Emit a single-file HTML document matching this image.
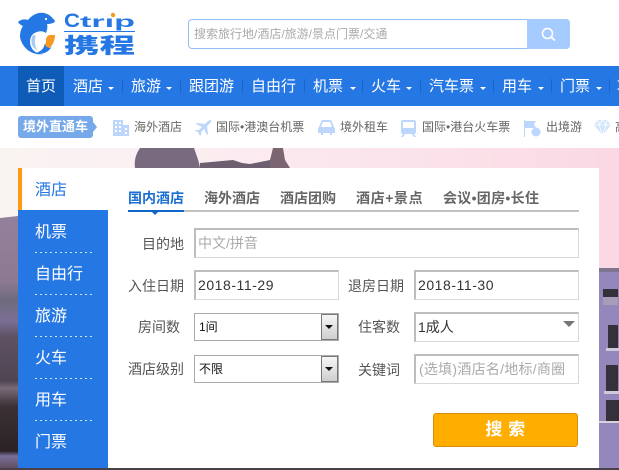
<!DOCTYPE html>
<html><head><meta charset="utf-8"><style>
*{box-sizing:border-box;margin:0;padding:0}
html,body{width:619px;height:470px;overflow:hidden;background:#fff;font-family:"Liberation Sans","Noto Sans CJK SC",sans-serif}
.a{position:absolute;white-space:nowrap}
#root{position:relative;width:619px;height:470px;overflow:hidden}
.nav{left:0;top:66px;width:619px;height:40px;background:#2577e3}
.n{position:absolute;top:78px;font-size:15px;line-height:18px;color:#fff;white-space:nowrap}
.c{position:absolute;top:87px;width:0;height:0;border-left:3px solid transparent;border-right:3px solid transparent;border-top:3px solid #fff}
.s{position:absolute;top:79px;width:1px;height:14px;background:#1a66c8}
.t{position:absolute;top:119px;font-size:12px;line-height:16px;color:#666;white-space:nowrap}
.side{position:absolute;left:35px;font-size:16px;line-height:20px;color:#fff;white-space:nowrap}
.dot{position:absolute;left:35px;width:60px;height:1px;background:repeating-linear-gradient(90deg,#cfe2fa 0 2px,transparent 2px 5px)}
.tab{position:absolute;top:189px;font-size:14px;line-height:18px;font-weight:bold;color:#666;white-space:nowrap}
.l{position:absolute;font-size:14px;line-height:18px;color:#555;text-align:right;white-space:nowrap}
.i{position:absolute;height:30px;background:#fff;border:1px solid #d8d8d8;border-top:2px solid #bdbdbd;border-left:2px solid #bdbdbd;font-size:14px;line-height:26px;padding-left:2px;color:#333;white-space:nowrap}
.d{letter-spacing:.55px}
.sel{position:absolute;left:194px;width:145px;height:28px;border:1px solid #aaa;background:#fff;font-size:12px;line-height:26px;color:#111;padding-left:4px}
.sb{position:absolute;right:0;top:0;width:17px;height:26px;border:1px solid #777;background:linear-gradient(#f6f6f6,#cfcfcf)}
.sb i{position:absolute;left:3px;top:10px;width:0;height:0;border-left:4px solid transparent;border-right:4px solid transparent;border-top:4px solid #111}
.w{position:absolute;background:#35313a}
</style></head><body><div id="root">

<!-- logo -->
<svg class="a" style="left:0;top:0" width="150" height="65" viewBox="0 0 150 65">
<path d="M18 22C21 19 25 19 28 20C32 15 38 12 44 13C49 14 52 17 55 21C55 23 50 24 47 24C48 27 47 30 46 33C42 30 37 31 33 34C29 38 29 45 33 50C36 53 40 54 44 54C32 56 22 48 20 37C20 32 21 29 23 26C21 25 19 24 18 22Z" fill="#2577e3"/>
<circle cx="46" cy="19" r="1.1" fill="#fff"/>
<path d="M33 35C30 40 31 47 37 50C35 46 34 40 36 36Z" fill="#a9cbf3"/>
<path d="M38 52C44 50 46 45 46 40C46 37 48 35 50 35H55C55 44 49 52 38 52Z" fill="#f59a23"/>
<path d="M36 53C42 51 44 48 45 43C45 47 50 50 52 46C49 52 43 55 36 53Z" fill="#2577e3"/>
<text x="64" y="27" font-family="Liberation Sans" font-weight="bold" font-size="19" fill="#2577e3" textLength="16" lengthAdjust="spacingAndGlyphs">C</text>
<text x="80" y="27" font-family="Liberation Sans" font-weight="bold" font-size="16" fill="#2577e3" textLength="55" lengthAdjust="spacingAndGlyphs">trıp</text>
<circle cx="113" cy="15" r="2.200" fill="#f59a23"/>
<rect x="64" y="31" width="71" height="1" fill="#2577e3"/>
<text x="64" y="53" font-family="Noto Sans CJK SC" font-weight="900" font-size="21" fill="#2577e3" textLength="71" lengthAdjust="spacingAndGlyphs">携程</text>
</svg>

<!-- search -->
<div class="a" style="left:188px;top:19px;width:382px;height:30px;border:1px solid #93bdf5;border-radius:4px;background:#fff;font-size:12px;line-height:28px;color:#aaa;padding-left:5px;overflow:hidden">搜索旅行地/酒店/旅游/景点门票/交通</div>
<div class="a" style="left:527px;top:19px;width:43px;height:30px;background:#a6cbff;border-radius:0 4px 4px 0"></div>
<svg class="a" style="left:540px;top:26px" width="17" height="17" viewBox="0 0 17 17"><circle cx="7.500" cy="7.500" r="5" fill="none" stroke="#fff" stroke-width="1.6"/><path d="M11 11L15 14.500" stroke="#fff" stroke-width="1.8"/></svg>

<!-- nav -->
<div class="a nav"></div>
<div class="a" style="left:18px;top:66px;width:46px;height:40px;background:#0e5cb8"></div>
<div class="n" style="left:26px">首页</div>
<div class="n" style="left:73px">酒店</div><div class="c" style="left:108px"></div><div class="s" style="left:122px"></div>
<div class="n" style="left:131px">旅游</div><div class="c" style="left:166px"></div><div class="s" style="left:180px"></div>
<div class="n" style="left:189px">跟团游</div><div class="s" style="left:242px"></div>
<div class="n" style="left:251px">自由行</div><div class="s" style="left:304px"></div>
<div class="n" style="left:313px">机票</div><div class="c" style="left:350px"></div><div class="s" style="left:362px"></div>
<div class="n" style="left:371px">火车</div><div class="c" style="left:406px"></div><div class="s" style="left:420px"></div>
<div class="n" style="left:429px">汽车票</div><div class="c" style="left:480px"></div><div class="s" style="left:493px"></div>
<div class="n" style="left:502px">用车</div><div class="c" style="left:538px"></div><div class="s" style="left:551px"></div>
<div class="n" style="left:560px">门票</div><div class="c" style="left:596px"></div><div class="s" style="left:609px"></div>
<div class="n" style="left:617px">攻略</div>

<!-- sub bar -->
<div class="a" style="left:18px;top:116px;width:75px;height:22px;background:#76a9ea;border-radius:3px;font-size:13px;line-height:21px;font-weight:bold;color:#fff;padding-left:5px">境外直通车</div>
<div class="a" style="left:93px;top:122px;width:0;height:0;border-left:4px solid #76a9ea;border-top:5px solid transparent;border-bottom:5px solid transparent"></div>
<svg class="a" style="left:112px;top:119px" width="18" height="18" viewBox="0 0 18 18"><path d="M1 1H11V17H1ZM11 6H17V17H11Z" fill="#bcd7fb"/><path d="M3 3h2v2H3zM7 3h2v2H7zM3 7h2v2H3zM7 7h2v2H7zM3 11h2v2H3zM7 11h2v2H7zM13 9h2v2h-2zM13 13h2v2h-2z" fill="#fff"/></svg>
<div class="t" style="left:134px">海外酒店</div>
<svg class="a" style="left:195px;top:120px" width="17" height="16" viewBox="0 0 17 16"><path d="M16 0C14 0 12 2 10 4L2 3 1 4 7 7 4 10 1 10 0 11 3 12 5 16 6 15 6 12 9 9 12 15 13 14 12 6C14 4 17 2 16 0Z" fill="#bcd7fb"/></svg>
<div class="t" style="left:216px">国际•港澳台机票</div>
<svg class="a" style="left:318px;top:120px" width="17" height="15" viewBox="0 0 17 15"><path d="M1 7L3 2C3 1 4 0 5 0H12C13 0 14 1 14 2L16 7C17 8 17 9 17 10V13H14V15H12V13H5V15H3V13H0V10C0 9 0 8 1 7ZM3 7H14L12 2H5Z" fill="#bcd7fb" fill-rule="evenodd"/></svg>
<div class="t" style="left:340px">境外租车</div>
<svg class="a" style="left:401px;top:120px" width="15" height="17" viewBox="0 0 15 17"><path d="M2 0H13C14 0 15 1 15 2V12C15 13 14 14 13 14L15 17H13L11 14H4L2 17H0L2 14C1 14 0 13 0 12V2C0 1 1 0 2 0ZM2 2V8H13V2Z" fill="#bcd7fb" fill-rule="evenodd"/></svg>
<div class="t" style="left:422px">国际•港台火车票</div>
<svg class="a" style="left:524px;top:120px" width="17" height="17" viewBox="0 0 17 17"><path d="M0 0H1V17H0ZM1 1H12L10 4 12 8H1Z" fill="#bcd7fb"/><circle cx="12" cy="12" r="4.500" fill="#bcd7fb"/></svg>
<div class="t" style="left:546px">出境游</div>
<svg class="a" style="left:594px;top:120px" width="17" height="15" viewBox="0 0 17 15"><path d="M4 0H13L17 5 8.500 15 0 5Z" fill="#d3e5fc"/><path d="M0 5H17M5 5L8.500 15 12 5M4 0L5 5 8.500 0 12 5 13 0" fill="none" stroke="#fff" stroke-width=".8"/></svg>
<div class="t" style="left:615px">高</div>

<!-- background photo -->
<div class="a" style="left:0;top:148px;width:619px;height:322px;background:linear-gradient(90deg,#f9f4f2 0,#fbf0f2 130px,#fbe8ee 300px,#fbdfe8 500px,#fad8e4 619px)"></div>
<svg class="a" style="left:0;top:148px" width="300" height="20" viewBox="0 0 300 20">
<path d="M135 20C134 12 136 6 140 0H194C196 6 199 13 200 20Z" fill="#7a6a80"/>
<path d="M200 20V15L233 12 242 15 250 16 270 12V20Z" fill="#6e5f70"/>
<path d="M270 20V12L273 0H283L285 12 290 20Z" fill="#7b6570"/>
</svg>
<!-- left strip -->
<div class="a" style="left:0;top:216px;width:18px;height:254px;background:linear-gradient(#93809a 0,#8d7a92 65px,#6f6a7e 85px,#7a7094 105px,#5e5264 120px,#4f4552 165px,#7a6a78 172px,#3c3236 190px,#2a2224 235px,#7a6f98 240px,#5c4a58 254px);clip-path:polygon(0 2px,100% 0,100% 100%,0 100%)"></div>
<!-- right strip -->
<div class="a" style="left:599px;top:268px;width:20px;height:202px;background:#9387bb"></div>
<div class="a" style="left:599px;top:268px;width:20px;height:4px;background:#7f7590"></div>
<div class="w" style="left:603px;top:289px;width:15px;height:8px"></div>
<div class="a" style="left:603px;top:297px;width:15px;height:8px;background:#a79db8"></div>
<div class="w" style="left:608px;top:325px;width:10px;height:23px"></div>
<div class="a" style="left:606px;top:348px;width:13px;height:3px;background:#cfc9dc"></div>
<div class="w" style="left:606px;top:365px;width:12px;height:26px"></div>
<div class="a" style="left:604px;top:391px;width:15px;height:3px;background:#cfc9dc"></div>
<div class="w" style="left:606px;top:400px;width:13px;height:21px"></div>
<div class="a" style="left:599px;top:421px;width:20px;height:2px;background:#d8d2dc"></div>
<div class="a" style="left:0;top:468px;width:619px;height:2px;background:#4a4048"></div>

<!-- panel -->
<div class="a" style="left:18px;top:168px;width:581px;height:300px;background:#fff"></div>
<div class="a" style="left:18px;top:168px;width:4px;height:42px;background:#ff9a14"></div>
<div class="a" style="left:18px;top:210px;width:90px;height:258px;background:#2577e3"></div>
<div class="side" style="top:181px;color:#2577e3">酒店</div>
<div class="side" style="top:223px">机票</div><div class="dot" style="top:252px"></div>
<div class="side" style="top:265px">自由行</div><div class="dot" style="top:294px"></div>
<div class="side" style="top:307px">旅游</div><div class="dot" style="top:336px"></div>
<div class="side" style="top:349px">火车</div><div class="dot" style="top:378px"></div>
<div class="side" style="top:391px">用车</div><div class="dot" style="top:420px"></div>
<div class="side" style="top:433px">门票</div>

<!-- tabs -->
<div class="tab" style="left:128px;color:#1a6fd0">国内酒店</div>
<div class="tab" style="left:204px">海外酒店</div>
<div class="tab" style="left:280px">酒店团购</div>
<div class="tab" style="left:356px;letter-spacing:.6px">酒店+景点</div>
<div class="tab" style="left:443px;letter-spacing:.3px">会议•团房•长住</div>
<div class="a" style="left:128px;top:210px;width:451px;height:2px;background:#c2c2c2"></div>
<div class="a" style="left:128px;top:210px;width:56px;height:2px;background:#0e66c8"></div>
<div class="a" style="left:152px;top:212px;width:0;height:0;border-left:3px solid transparent;border-right:3px solid transparent;border-top:3px solid #0e66c8"></div>

<!-- form -->
<div class="l" style="left:128px;width:56px;top:235px">目的地</div>
<div class="i" style="left:194px;top:228px;width:385px;color:#aaa">中文/拼音</div>
<div class="l" style="left:128px;width:56px;top:277px">入住日期</div>
<div class="i d" style="left:194px;top:270px;width:145px">2018-11-29</div>
<div class="l" style="left:348px;width:56px;top:277px">退房日期</div>
<div class="i d" style="left:414px;top:270px;width:165px">2018-11-30</div>
<div class="l" style="left:128px;width:52px;top:318px">房间数</div>
<div class="sel" style="top:313px">1间<div class="sb"><i></i></div></div>
<div class="l" style="left:348px;width:52px;top:318px">住客数</div>
<div class="i" style="left:414px;top:312px;width:165px">1成人</div>
<div class="a" style="left:563px;top:321px;width:0;height:0;border-left:6px solid transparent;border-right:6px solid transparent;border-top:6px solid #777"></div>
<div class="l" style="left:128px;width:56px;top:360px">酒店级别</div>
<div class="sel" style="top:355px">不限<div class="sb"><i></i></div></div>
<div class="l" style="left:348px;width:52px;top:361px">关键词</div>
<div class="i" style="left:414px;top:354px;width:165px;color:#aaa;padding-left:3px;letter-spacing:.25px">(选填)酒店名/地标/商圈</div>
<div class="a" style="left:433px;top:413px;width:145px;height:34px;background:#ffae00;border:1px solid #d98e0a;border-radius:3px;font-size:17px;font-weight:bold;line-height:31px;color:#fff;text-align:center;letter-spacing:.5px">搜 索</div>

</div></body></html>
